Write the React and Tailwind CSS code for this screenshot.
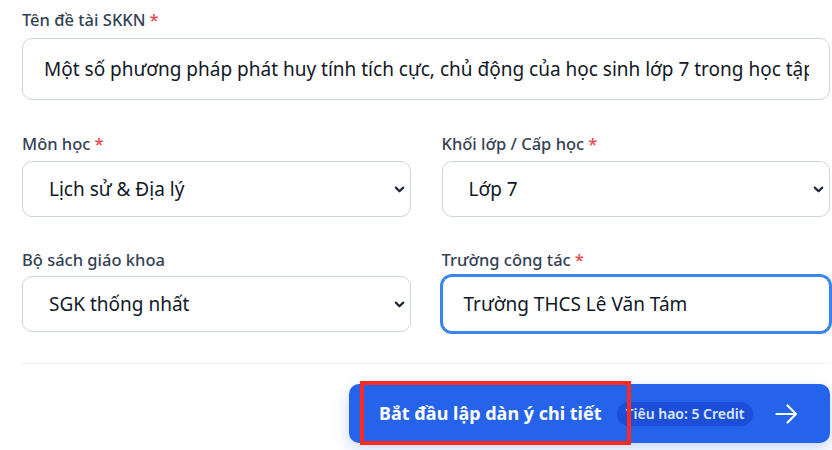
import React from "react";

function Label({ children, required }) {
  return (
    <div className="text-[16.5px] leading-6 font-medium text-[#334155]">
      {children}
      {required && <span className="text-[#ef4444] ml-1">*</span>}
    </div>
  );
}

function Chevron() {
  return (
    <svg width="11" height="7" viewBox="0 0 11 7" fill="none" className="shrink-0">
      <path d="M1.8 1.6 L5.5 5.3 L9.2 1.6" stroke="#1e293b" strokeWidth="2.2" strokeLinecap="round" strokeLinejoin="round" />
    </svg>
  );
}

function Select({ value }) {
  return (
    <div className="h-[56px] rounded-[10px] border border-[#cbd5e1] bg-white flex items-center pl-[26px] pr-[5px]">
      <span className="flex-1 text-[19px] text-[#111827]">{value}</span>
      <Chevron />
    </div>
  );
}

export default function App() {
  return (
    <div
      className="w-[832px] h-[450px] bg-white overflow-hidden relative"
      style={{ fontFamily: '"Noto Sans", "Open Sans", sans-serif' }}
    >
      <div className="w-[808px] ml-[22px] pt-[8px]">
        <Label required>Tên đề tài SKKN</Label>
        <div className="mt-[6px] h-[62px] rounded-[10px] border border-[#cbd5e1] bg-white flex items-center pl-[21px] pr-[20px] overflow-hidden">
          <span className="text-[19px] text-[#111827] whitespace-nowrap overflow-hidden">
            Một số phương pháp phát huy tính tích cực, chủ động của học sinh lớp 7 trong học tập
          </span>
        </div>

        <div className="grid grid-cols-2 gap-x-[31px] mt-[32px]">
          <div>
            <Label required>Môn học</Label>
            <div className="mt-[5px]">
              <Select value="Lịch sử & Địa lý" />
            </div>
          </div>
          <div>
            <Label required>Khối lớp / Cấp học</Label>
            <div className="mt-[5px]">
              <Select value="Lớp 7" />
            </div>
          </div>
        </div>

        <div className="grid grid-cols-2 gap-x-[31px] mt-[31px]">
          <div>
            <Label>Bộ sách giáo khoa</Label>
            <div className="mt-[4px]">
              <Select value="SGK thống nhất" />
            </div>
          </div>
          <div>
            <Label required>Trường công tác</Label>
            <div className="mt-[4px] h-[56px] rounded-[10px] border border-[#3b82f6] ring-2 ring-[#3b82f6] bg-white flex items-center pl-[21px]">
              <span className="text-[19px] text-[#111827]">Trường THCS Lê Văn Tám</span>
            </div>
          </div>
        </div>

        <div className="mt-[31px] h-px bg-[#eef2f6]" />

        <div className="flex justify-end mt-[20px]">
          <div className="h-[59px] w-[481px] rounded-[10px] bg-[#2563eb] shadow-[0_6px_16px_rgba(37,99,235,0.25)] flex items-center pl-[30px] pr-[32px]">
            <span className="text-[18px] font-bold text-white whitespace-nowrap">Bắt đầu lập dàn ý chi tiết</span>
            <span className="ml-[15px] h-[24px] px-[9px] rounded-full bg-[#1d4ed8] text-[14px] font-semibold text-[#dbeafe] flex items-center whitespace-nowrap">
              Tiêu hao: 5 Credit
            </span>
            <span className="ml-auto">
              <svg width="23" height="20" viewBox="0 0 23 20" fill="none">
                <path d="M1.5 10 H21 M12.5 1.5 L21 10 L12.5 18.5" stroke="white" strokeWidth="2.2" strokeLinecap="round" strokeLinejoin="round" />
              </svg>
            </span>
          </div>
        </div>
      </div>
      <div className="absolute left-[360px] top-[381px] w-[271px] h-[64px] border-[4px] border-[#ff2a1f]" />
    </div>
  );
}
